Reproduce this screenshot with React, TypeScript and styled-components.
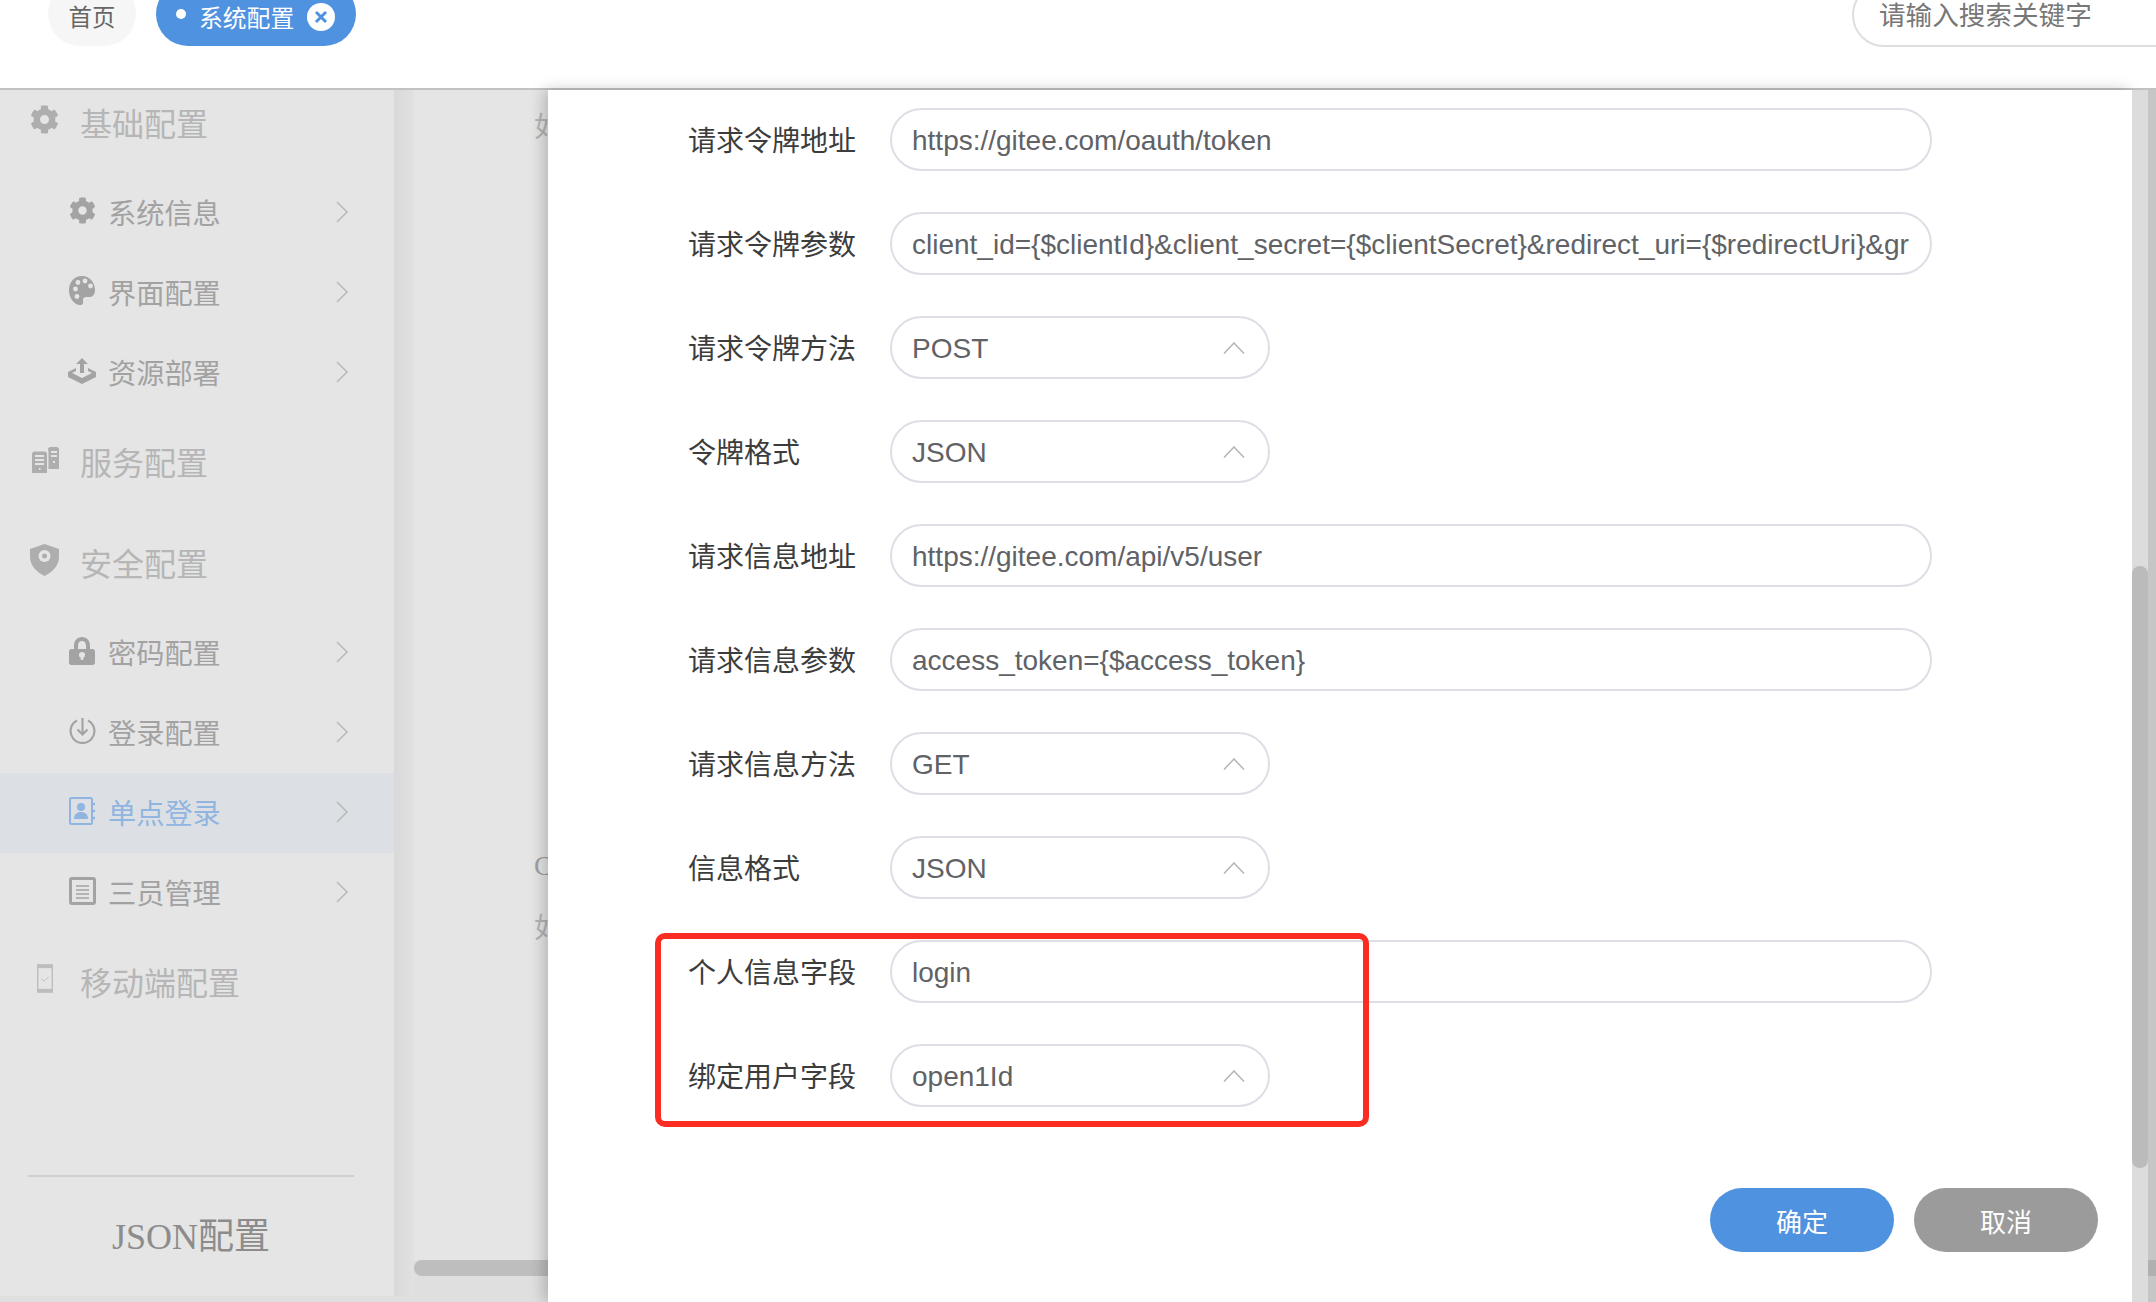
import React from "react";
import styled, { createGlobalStyle } from "styled-components";
import { FaCog } from "react-icons/fa";

const Global = createGlobalStyle`
  html, body { margin: 0; padding: 0; background: #fff; }
  * { box-sizing: border-box; }
`;

const SERIF = `"Liberation Serif", "Noto Sans CJK SC", serif`;
const SANS = `"Liberation Sans", "Noto Sans CJK SC", sans-serif`;

const Page = styled.div`
  width: 2156px;
  height: 1302px;
  overflow: hidden;
  display: flex;
  flex-direction: column;
  font-family: ${SANS};
`;

const Header = styled.header`
  height: 90px;
  flex: none;
  display: flex;
  align-items: flex-start;
  background: #fff;
  border-bottom: 2px solid #c2c2c2;
  padding-left: 48px;
  overflow: hidden;
`;

const Tabs = styled.div`
  display: flex;
  gap: 20px;
  margin-top: -18px;
`;

const Tab = styled.div<{ $active?: boolean }>`
  height: 64px;
  width: ${(p) => (p.$active ? "200px" : "88px")};
  border-radius: 32px;
  display: flex;
  align-items: center;
  justify-content: ${(p) => (p.$active ? "flex-start" : "center")};
  padding-left: ${(p) => (p.$active ? "20px" : "0")};
  padding-top: ${(p) => (p.$active ? "6px" : "6px")};
  background: ${(p) => (p.$active ? "#4f92e0" : "#f6f6f6")};
  color: ${(p) => (p.$active ? "#fff" : "#666")};
  font-family: ${SERIF};
  font-size: ${(p) => (p.$active ? "23.8px" : "23.4px")};
`;

const TabText = styled.span`
  margin-bottom: 2px;
`;

const TabDot = styled.span`
  width: 10px;
  height: 10px;
  border-radius: 50%;
  background: #fff;
  margin: -6px 13px 0 0;
  flex: none;
`;

const TabClose = styled.svg`
  width: 28px;
  height: 28px;
  margin-left: 13px;
  flex: none;
`;

const Search = styled.div`
  margin: -17px -40px 0 auto;
  width: 344px;
  height: 64px;
  flex: none;
  border: 2px solid #dedede;
  border-radius: 32px;
  padding: 14px 0 0 25px;
  color: #777;
  font-size: 26.6px;
  line-height: 34px;
  background: #fff;
`;

const Body = styled.div`
  flex: 1;
  min-height: 0;
  display: flex;
  background: #dfdfdf;
`;

const Sidebar = styled.aside`
  width: 394px;
  height: 1206px;
  flex: none;
  display: flex;
  flex-direction: column;
  background: #e5e5e5;
  font-family: ${SERIF};
`;

const Group = styled.section<{ $after: number }>`
  margin-bottom: ${(p) => p.$after}px;
`;

const GroupHead = styled.div`
  height: 70px;
  display: flex;
  align-items: center;
  padding-left: 30px;
  color: #b6b6b6;
  font-size: 32px;
`;

const GroupLabel = styled.span`
  margin-bottom: 6px;
`;

const GroupIcon = styled.span`
  width: 29px;
  height: 30px;
  margin: 0 21px 11px 0;
  flex: none;
  display: flex;
  align-items: center;
  justify-content: center;
  color: #aeaeae;
`;

const SubList = styled.div`
  margin-top: 13px;
`;

const SubItem = styled.div<{ $active?: boolean }>`
  height: 80px;
  display: flex;
  align-items: center;
  padding: 0 46px 0 68px;
  font-size: 28.2px;
  color: ${(p) => (p.$active ? "#90b5e0" : "#a2a2a2")};
  background: ${(p) => (p.$active ? "#dce0e4" : "transparent")};
`;

const SubIcon = styled.span<{ $active?: boolean }>`
  width: 28px;
  height: 30px;
  margin: 0 12px 5px 0;
  flex: none;
  display: flex;
  align-items: center;
  justify-content: center;
  color: ${(p) => (p.$active ? "#90b5e0" : "#a3a3a3")};
`;

const SubLabel = styled.span`
  flex: 1;
  margin-bottom: 4px;
`;

const Chevron = styled.svg`
  width: 12px;
  height: 22px;
  flex: none;
  margin-bottom: 2px;
`;

const SideFooter = styled.div`
  margin: auto 40px 0 28px;
  height: 121px;
  border-top: 2px solid #cfcfcf;
  display: flex;
  align-items: center;
  justify-content: center;
  padding-bottom: 8px;
  color: #8c8c8c;
  font-size: 36px;
`;

const Gutter = styled.div`
  width: 20px;
  height: 1206px;
  flex: none;
  background: linear-gradient(90deg, #d9d9d9, #e1e1e1);
`;

const Backdrop = styled.div`
  width: 134px;
  flex: none;
  display: flex;
  flex-direction: column;
  overflow: hidden;
`;

const BackdropContent = styled.div`
  flex: 1;
  background: #e5e5e5;
  padding-left: 120px;
  font-family: ${SERIF};
  font-size: 28px;
  line-height: 40px;
  color: #b4b4b4;
  white-space: nowrap;
`;

const BackdropLine = styled.div<{ $top: number; $dark?: boolean }>`
  margin-top: ${(p) => p.$top}px;
  color: ${(p) => (p.$dark ? "#a0a0a0" : "#b4b4b4")};
`;

const HScroll = styled.div`
  height: 16px;
  flex: none;
  background: #bebebe;
  border-radius: 8px 0 0 8px;
`;

const BackdropFoot = styled.div`
  height: 26px;
  flex: none;
`;

const Modal = styled.main`
  flex: 1;
  min-width: 0;
  position: relative;
  background: #fff;
  box-shadow: -4px 0 14px rgba(0, 0, 0, 0.22);
  padding: 18px 34px 0 140px;
`;

const Row = styled.div`
  display: flex;
  align-items: center;
  height: 63px;
  margin-bottom: 41px;
`;

const Label = styled.label`
  width: 202px;
  flex: none;
  margin-bottom: 1px;
  font-size: 28px;
  color: #3c3c3c;
`;

const Field = styled.div<{ $select?: boolean }>`
  width: ${(p) => (p.$select ? "380px" : "1042px")};
  height: 63px;
  flex: none;
  border: 2px solid #dcdfe6;
  border-radius: 32px;
  display: flex;
  align-items: center;
  padding: 0 21px 0 20px;
  font-size: 28px;
  color: #606266;
  overflow: hidden;
  white-space: nowrap;
`;

const FieldText = styled.span`
  flex: 1;
  min-width: 0;
  overflow: hidden;
  padding-top: 2px;
`;

const Caret = styled.svg`
  width: 22px;
  height: 12px;
  flex: none;
  margin-right: 2px;
`;

const Footer = styled.div`
  display: flex;
  justify-content: flex-end;
  gap: 20px;
  margin-top: 81px;
`;

const Btn = styled.button<{ $primary?: boolean }>`
  width: 184px;
  height: 64px;
  border: 0;
  border-radius: 32px;
  background: ${(p) => (p.$primary ? "#4f92e0" : "#9b9b9b")};
  color: #fff;
  font-family: ${SANS};
  font-size: 26px;
`;

const Highlight = styled.div`
  position: absolute;
  left: 107px;
  top: 843px;
  width: 714px;
  height: 194px;
  border: 6px solid #fb2d22;
  border-radius: 10px;
  pointer-events: none;
`;

const ScrollTrack = styled.div`
  width: 16px;
  flex: none;
  background: #dcdcdc;
  padding-top: 476px;
  position: relative;
`;

const ScrollThumb = styled.div`
  height: 602px;
  background: #bbbbbb;
  border-radius: 8px;
`;

const EdgeStrip = styled.div`
  width: 8px;
  flex: none;
  background: #c6c6c6;
  padding-top: 1170px;
`;

const EdgeBand = styled.div`
  height: 16px;
  background: #b0b0b0;
`;

const ServerIcon = () => (
  <svg width="28" height="28" viewBox="0 0 28 28" fill="currentColor">
    <path d="M1 9c0-1.500 1-2.500 2.500-2.500h10C15 6.500 16 7.500 16 9v19H1z" />
    <path d="M17 4.500c0-1.500 1-2.500 2.500-2.500h6c1.500 0 2.500 1 2.500 2.500V24H17.500V8c0-1-.2-2.500-.5-3.500z" />
    <g fill="#e5e5e5">
      <rect x="4" y="10" width="9" height="2" />
      <rect x="4" y="14" width="9" height="2" />
      <rect x="4" y="18" width="9" height="2" />
      <rect x="20" y="6" width="6" height="2" />
      <rect x="20" y="10" width="6" height="2" />
      <rect x="22" y="16" width="2" height="2" />
      <rect x="8" y="23" width="1.500" height="2" />
    </g>
  </svg>
);

const ShieldIcon = () => (
  <svg width="29" height="32" viewBox="0 0 29 32" fill="currentColor">
    <path d="M14.500 0 29 5v8c0 8-6 15-14.500 19C6 28 0 21 0 13V5z" />
    <circle cx="14.500" cy="12" r="6" fill="#e5e5e5" />
    <circle cx="14.500" cy="12" r="2.500" />
  </svg>
);

const TabletIcon = () => (
  <svg width="16" height="29" viewBox="0 0 17 30" fill="none" stroke="#bdbdbd">
    <rect x="0.750" y="0.750" width="15.500" height="28.500" strokeWidth="1.500" />
    <rect x="0" y="0" width="17" height="4" fill="#bdbdbd" stroke="none" />
    <rect x="0" y="26" width="17" height="4" fill="#bdbdbd" stroke="none" />
    <path d="M4.500 15l3 3 5-5" strokeWidth="1" />
  </svg>
);

const PaletteIcon = () => (
  <svg width="26" height="29" viewBox="0 0 26 29" fill="currentColor">
    <path d="M13 0C5.500 0 0 6 0 14c0 8 5 15 11 15 3 0 3.500-2 3-4-.6-2.500 1-4 3.500-4H21c3 0 5-3 5-7C26 6 20 0 13 0z" />
    <g fill="#e5e5e5">
      <circle cx="6.500" cy="13" r="2.400" />
      <circle cx="9" cy="6.500" r="2.400" />
      <circle cx="16" cy="5" r="2.400" />
      <circle cx="21.500" cy="10" r="2.400" />
      <circle cx="8" cy="20.500" r="2.400" />
    </g>
  </svg>
);

const UploadIcon = () => (
  <svg width="28" height="26" viewBox="0 0 28 26" fill="currentColor">
    <path d="M14 0l6 6h-4v9h-4V6H8z" />
    <path d="M8 10v3L4 15l10 5 10-5-4-2v-3l8 4v5l-14 7-14-7v-5z" />
  </svg>
);

const LockIcon = () => (
  <svg width="26" height="28" viewBox="0 0 26 28" fill="currentColor">
    <path d="M5 12V8.500C5 3.500 8.500 0 13 0s8 3.500 8 8.500V12h2.500c1.500 0 2.500 1 2.500 2.500v11c0 1.500-1 2.500-2.500 2.500h-21C1 28 0 27 0 25.500v-11C0 13 1 12 2.500 12zm4 0h8V8.500C17 6 15.500 4 13 4S9 6 9 8.500z" />
    <circle cx="13" cy="18" r="3" fill="#e5e5e5" />
    <rect x="11.800" y="18" width="2.400" height="5" fill="#e5e5e5" />
  </svg>
);

const PowerIcon = () => (
  <svg width="27" height="27" viewBox="0 0 27 27" fill="none" stroke="currentColor" strokeWidth="2.200">
    <path d="M8 3.500a11.900 11.900 0 1 0 11 0" />
    <path d="M13.500 1v16" />
    <path d="M8.500 12.500l5 5 5-5" />
  </svg>
);

const ContactIcon = () => (
  <svg width="26" height="28" viewBox="0 0 26 28" fill="none" stroke="currentColor" strokeWidth="2">
    <rect x="1" y="1" width="22" height="26" rx="1.500" />
    <circle cx="12" cy="10" r="4" fill="currentColor" stroke="none" />
    <path d="M5 22c0-5 3-7 7-7s7 2 7 7z" fill="currentColor" stroke="none" />
    <path d="M23 7h3M23 14h3M23 21h3" strokeWidth="2.500" />
  </svg>
);

const ListIcon = () => (
  <svg width="27" height="28" viewBox="0 0 27 28" fill="none" stroke="currentColor">
    <rect x="1.500" y="1.500" width="24" height="25" rx="1.500" strokeWidth="3" />
    <path d="M7 9h13M7 13h13M7 17h13M7 21h13" strokeWidth="1.500" />
  </svg>
);

type Sub = { label: string; icon: React.ReactNode; active?: boolean };

const basic: Sub[] = [
  { label: "系统信息", icon: <FaCog size={27} /> },
  { label: "界面配置", icon: <PaletteIcon /> },
  { label: "资源部署", icon: <UploadIcon /> },
];

const security: Sub[] = [
  { label: "密码配置", icon: <LockIcon /> },
  { label: "登录配置", icon: <PowerIcon /> },
  { label: "单点登录", icon: <ContactIcon />, active: true },
  { label: "三员管理", icon: <ListIcon /> },
];

const fields: { label: string; value: string; select?: boolean }[] = [
  { label: "请求令牌地址", value: "https://gitee.com/oauth/token" },
  {
    label: "请求令牌参数",
    value:
      "client_id={$clientId}&client_secret={$clientSecret}&redirect_uri={$redirectUri}&grant_type=authorization_code&code={$code}",
  },
  { label: "请求令牌方法", value: "POST", select: true },
  { label: "令牌格式", value: "JSON", select: true },
  { label: "请求信息地址", value: "https://gitee.com/api/v5/user" },
  { label: "请求信息参数", value: "access_token={$access_token}" },
  { label: "请求信息方法", value: "GET", select: true },
  { label: "信息格式", value: "JSON", select: true },
  { label: "个人信息字段", value: "login" },
  { label: "绑定用户字段", value: "open1Id", select: true },
];

const SubRows = ({ items }: { items: Sub[] }) => (
  <SubList>
    {items.map((it) => (
      <SubItem key={it.label} $active={it.active}>
        <SubIcon $active={it.active}>{it.icon}</SubIcon>
        <SubLabel>{it.label}</SubLabel>
        <Chevron viewBox="0 0 12 22" fill="none" stroke="#b4b4b4" strokeWidth="1.400">
          <path d="M1 1l10 10L1 21" />
        </Chevron>
      </SubItem>
    ))}
  </SubList>
);

export default function App() {
  return (
    <Page>
      <Global />
      <Header>
        <Tabs>
          <Tab>
            <TabText>首页</TabText>
          </Tab>
          <Tab $active>
            <TabDot />
            <TabText>系统配置</TabText>
            <TabClose viewBox="0 0 28 28">
              <circle cx="14" cy="14" r="14" fill="#fff" />
              <path d="M9 9l10 10M19 9L9 19" stroke="#4f92e0" strokeWidth="3" />
            </TabClose>
          </Tab>
        </Tabs>
        <Search>请输入搜索关键字</Search>
      </Header>
      <Body>
        <Sidebar>
          <Group $after={16}>
            <GroupHead>
              <GroupIcon>
                <FaCog size={29} />
              </GroupIcon>
              <GroupLabel>基础配置</GroupLabel>
            </GroupHead>
            <SubRows items={basic} />
          </Group>
          <Group $after={31}>
            <GroupHead>
              <GroupIcon>
                <ServerIcon />
              </GroupIcon>
              <GroupLabel>服务配置</GroupLabel>
            </GroupHead>
          </Group>
          <Group $after={16}>
            <GroupHead>
              <GroupIcon>
                <ShieldIcon />
              </GroupIcon>
              <GroupLabel>安全配置</GroupLabel>
            </GroupHead>
            <SubRows items={security} />
          </Group>
          <Group $after={0}>
            <GroupHead>
              <GroupIcon>
                <TabletIcon />
              </GroupIcon>
              <GroupLabel>移动端配置</GroupLabel>
            </GroupHead>
          </Group>
          <SideFooter>JSON配置</SideFooter>
        </Sidebar>
        <Gutter />
        <Backdrop>
          <BackdropContent>
            <BackdropLine $top={18}>如</BackdropLine>
            <BackdropLine $top={698} $dark>
              C
            </BackdropLine>
            <BackdropLine $top={23}>如</BackdropLine>
          </BackdropContent>
          <HScroll />
          <BackdropFoot />
        </Backdrop>
        <Modal>
          {fields.map((f) => (
            <Row key={f.label}>
              <Label>{f.label}</Label>
              <Field $select={f.select}>
                <FieldText>{f.value}</FieldText>
                {f.select && (
                  <Caret viewBox="0 0 22 12" fill="none" stroke="#b3b5bb" strokeWidth="1.500">
                    <path d="M1 11.500L11 1l10 10.500" />
                  </Caret>
                )}
              </Field>
            </Row>
          ))}
          <Footer>
            <Btn $primary>确定</Btn>
            <Btn>取消</Btn>
          </Footer>
          <Highlight />
        </Modal>
        <ScrollTrack>
          <ScrollThumb />
        </ScrollTrack>
        <EdgeStrip>
          <EdgeBand />
        </EdgeStrip>
      </Body>
    </Page>
  );
}
